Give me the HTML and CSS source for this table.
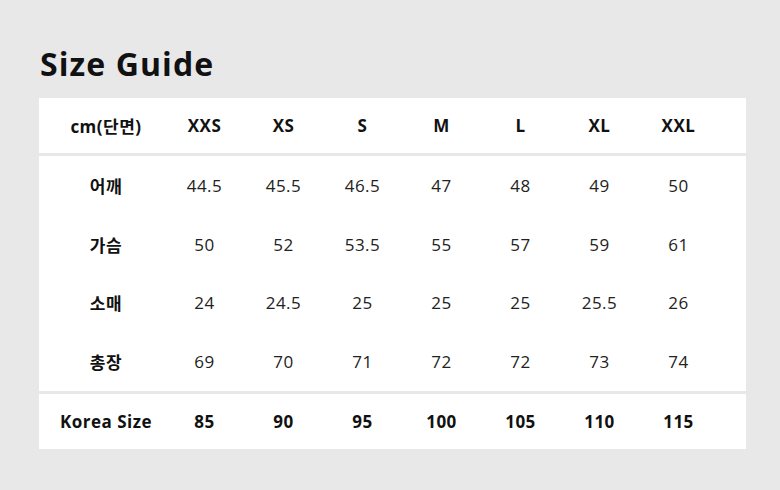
FILE: index.html
```html
<!DOCTYPE html>
<html lang="ko">
<head>
<meta charset="utf-8">
<link rel="stylesheet" href="styles.css">
</head>
<body>
<h1 class="title">Size Guide</h1>
<div class="panel">
  <div class="row head">
    <div class="label">cm(단면)</div><div>XXS</div><div>XS</div><div>S</div><div>M</div><div>L</div><div>XL</div><div>XXL</div>
  </div>
  <div class="body">
    <div class="row"><div class="label">어깨</div><div>44.5</div><div>45.5</div><div>46.5</div><div>47</div><div>48</div><div>49</div><div>50</div></div>
    <div class="row"><div class="label">가슴</div><div>50</div><div>52</div><div>53.5</div><div>55</div><div>57</div><div>59</div><div>61</div></div>
    <div class="row"><div class="label">소매</div><div>24</div><div>24.5</div><div>25</div><div>25</div><div>25</div><div>25.5</div><div>26</div></div>
    <div class="row"><div class="label">총장</div><div>69</div><div>70</div><div>71</div><div>72</div><div>72</div><div>73</div><div>74</div></div>
  </div>
  <div class="row foot">
    <div class="label">Korea Size</div><div>85</div><div>90</div><div>95</div><div>100</div><div>105</div><div>110</div><div>115</div>
  </div>
</div>
</body>
</html>
```
FILE: styles.css
```css
html, body {
  margin: 0;
  padding: 0;
  background: #e8e8e8;
}
body {
  font-family: "Open Sans", "Noto Sans CJK KR", sans-serif;
  color: #111;
  padding: 44px 34px 0 39px;
}
.title {
  margin: 0 0 14px 1px;
  font-size: 32px;
  font-weight: 700;
  line-height: 40px;
  letter-spacing: 1.1px;
}
.panel {
  width: 707px;
  display: flex;
  flex-direction: column;
  gap: 3px;
}
.row {
  display: grid;
  grid-template-columns: 126px repeat(7, 79px);
  align-items: center;
  justify-items: center;
  background: #fff;
  font-size: 17px;
  letter-spacing: 0.5px;
  color: #222;
}
.row .label {
  padding-left: 8px;
  font-weight: 700;
  color: #111;
}
.head, .foot {
  height: 55px;
  font-weight: 700;
  color: #111;
}
.body {
  background: #fff;
  display: flex;
  flex-direction: column;
}
.body .row {
  height: 58.75px;
}
```
